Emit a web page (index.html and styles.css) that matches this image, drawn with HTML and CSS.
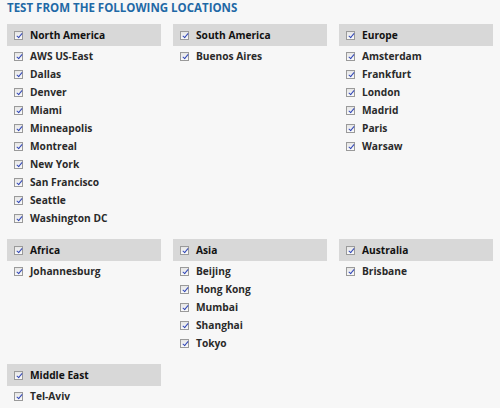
FILE: index.html
```html
<!DOCTYPE html>
<html>
<head>
<meta charset="utf-8">
<link rel="stylesheet" href="styles.css">
</head>
<body>
<div class="page">
  <h1 class="title">TEST FROM THE FOLLOWING LOCATIONS</h1>
  <div class="grid">
    <section class="region">
      <div class="region-head"><span class="cb"></span>North America</div>
      <ul class="list">
        <li><span class="cb"></span>AWS US-East</li>
        <li><span class="cb"></span>Dallas</li>
        <li><span class="cb"></span>Denver</li>
        <li><span class="cb"></span>Miami</li>
        <li><span class="cb"></span>Minneapolis</li>
        <li><span class="cb"></span>Montreal</li>
        <li><span class="cb"></span>New York</li>
        <li><span class="cb"></span>San Francisco</li>
        <li><span class="cb"></span>Seattle</li>
        <li><span class="cb"></span>Washington DC</li>
      </ul>
    </section>
    <section class="region">
      <div class="region-head"><span class="cb"></span>South America</div>
      <ul class="list">
        <li><span class="cb"></span>Buenos Aires</li>
      </ul>
    </section>
    <section class="region">
      <div class="region-head"><span class="cb"></span>Europe</div>
      <ul class="list">
        <li><span class="cb"></span>Amsterdam</li>
        <li><span class="cb"></span>Frankfurt</li>
        <li><span class="cb"></span>London</li>
        <li><span class="cb"></span>Madrid</li>
        <li><span class="cb"></span>Paris</li>
        <li><span class="cb"></span>Warsaw</li>
      </ul>
    </section>
    <section class="region">
      <div class="region-head"><span class="cb"></span>Africa</div>
      <ul class="list">
        <li><span class="cb"></span>Johannesburg</li>
      </ul>
    </section>
    <section class="region">
      <div class="region-head"><span class="cb"></span>Asia</div>
      <ul class="list">
        <li><span class="cb"></span>Beijing</li>
        <li><span class="cb"></span>Hong Kong</li>
        <li><span class="cb"></span>Mumbai</li>
        <li><span class="cb"></span>Shanghai</li>
        <li><span class="cb"></span>Tokyo</li>
      </ul>
    </section>
    <section class="region">
      <div class="region-head"><span class="cb"></span>Australia</div>
      <ul class="list">
        <li><span class="cb"></span>Brisbane</li>
      </ul>
    </section>
    <section class="region">
      <div class="region-head"><span class="cb"></span>Middle East</div>
      <ul class="list">
        <li><span class="cb"></span>Tel-Aviv</li>
      </ul>
    </section>
  </div>
</div>
</body>
</html>
```
FILE: styles.css
```css
* { box-sizing: border-box; }
html, body {
  margin: 0;
  padding: 0;
  background: #f7f7f7;
}
body {
  font-family: "Open Sans", "DejaVu Sans", sans-serif;
  color: #222;
}
.page {
  padding: 0 7px;
}
.title {
  margin: 0;
  height: 24px;
  padding-top: 1px;
  font-size: 11.5px;
  line-height: 14px;
  font-weight: 700;
  color: #1f69a6;
}
.grid {
  display: grid;
  grid-template-columns: 154px 154px 154px;
  column-gap: 12px;
  row-gap: 12px;
}
.region-head {
  display: flex;
  align-items: center;
  height: 22px;
  padding-left: 7px;
  background: #d8d8d8;
  font-size: 10.2px;
  font-weight: 700;
  color: #111;
}
.list {
  list-style: none;
  margin: 0;
  padding: 1px 0 0 0;
}
.list li {
  display: flex;
  align-items: center;
  height: 18px;
  padding-left: 7px;
  font-size: 10.2px;
  font-weight: 700;
  color: #2a2a2a;
}
.cb {
  position: relative;
  flex: none;
  width: 9px;
  height: 9px;
  margin-right: 7px;
  border: 1px solid #9a9a9a;
  background: linear-gradient(#e6e6e6, #fafafa);
}
.cb::after {
  content: "";
  position: absolute;
  left: 3px;
  top: 0px;
  width: 2px;
  height: 5px;
  border-right: 1.5px solid #3348b8;
  border-bottom: 1.5px solid #3348b8;
  transform: rotate(40deg);
}
```
